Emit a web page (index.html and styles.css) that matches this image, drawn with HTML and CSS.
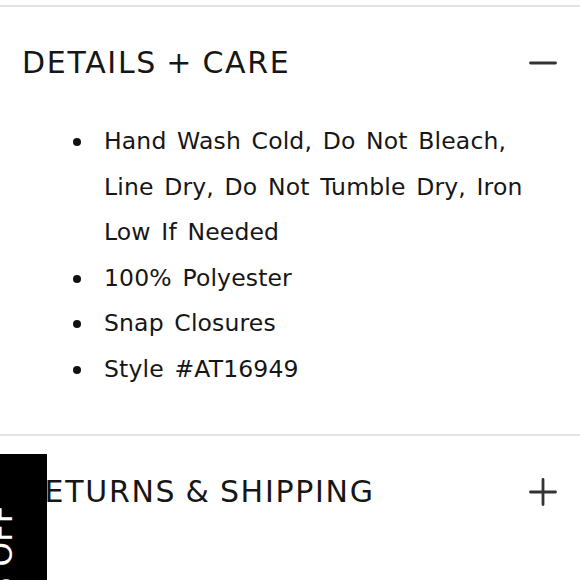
FILE: index.html
```html
<!DOCTYPE html>
<html lang="en">
<head>
<meta charset="utf-8">
<title>Details + Care</title>
<link rel="stylesheet" href="styles.css">
</head>
<body>
<main class="page">
  <section class="acc acc-open">
    <header class="acc-head">
      <h2 class="acc-title">DETAILS + CARE</h2>
      <svg class="acc-icon" viewBox="0 0 28 28" aria-hidden="true"><path d="M1.5 14H26.5" /></svg>
    </header>
    <ul class="care-list">
      <li><span>Hand Wash Cold, Do Not Bleach, Line Dry, Do Not Tumble Dry, Iron Low If Needed</span></li>
      <li><span>100% Polyester</span></li>
      <li><span>Snap Closures</span></li>
      <li><span>Style #AT16949</span></li>
    </ul>
  </section>
  <section class="acc">
    <header class="acc-head">
      <h2 class="acc-title">RETURNS &amp; SHIPPING</h2>
      <svg class="acc-icon" viewBox="0 0 28 28" aria-hidden="true"><path d="M1.5 14H26.5M14 1.5V26.5" /></svg>
    </header>
  </section>
</main>
<aside class="promo-tab"><span class="promo-text">10% OFF</span></aside>
</body>
</html>
```
FILE: styles.css
```css
html, body {
  margin: 0;
  padding: 0;
  background: #ffffff;
}
body {
  font-family: "DejaVu Sans", "Liberation Sans", sans-serif;
  color: #161616;
  overflow: hidden;
}
.page {
  padding-top: 5px;
}
.acc {
  border-top: 2px solid #e3e3e3;
}
.acc-head {
  display: flex;
  align-items: center;
  justify-content: space-between;
  height: 112px;
  padding: 0 23px 0 22px;
  box-sizing: border-box;
}
.acc-title {
  margin: 0;
  font-size: 30px;
  font-weight: 400;
  letter-spacing: 1.7px;
  word-spacing: -2px;
  line-height: 1;
}
.acc-icon {
  width: 28px;
  height: 28px;
  flex: none;
}
.acc-icon path {
  stroke: #333333;
  stroke-width: 2.8;
  stroke-linecap: round;
  fill: none;
}
.care-list {
  list-style: none;
  margin: 0;
  padding: 0 30px 42px 73px;
  font-size: 23.5px;
  line-height: 45.5px;
  letter-spacing: 0.15px;
  word-spacing: 3px;
}
.care-list li {
  display: grid;
  grid-template-columns: 31px 1fr;
}
.care-list li::before {
  content: "";
  width: 8px;
  height: 8px;
  border-radius: 50%;
  background: #111;
  margin-top: 19px;
}
.promo-tab {
  position: fixed;
  left: 0;
  top: 454px;
  width: 47px;
  height: 160px;
  background: #000;
  overflow: hidden;
}
.promo-text {
  position: absolute;
  left: -17px;
  top: 51px;
  color: #fff;
  font-size: 31px;
  letter-spacing: 0.5px;
  white-space: nowrap;
  transform-origin: left top;
  transform: rotate(-90deg) translate(-100%, 0);
}
```
